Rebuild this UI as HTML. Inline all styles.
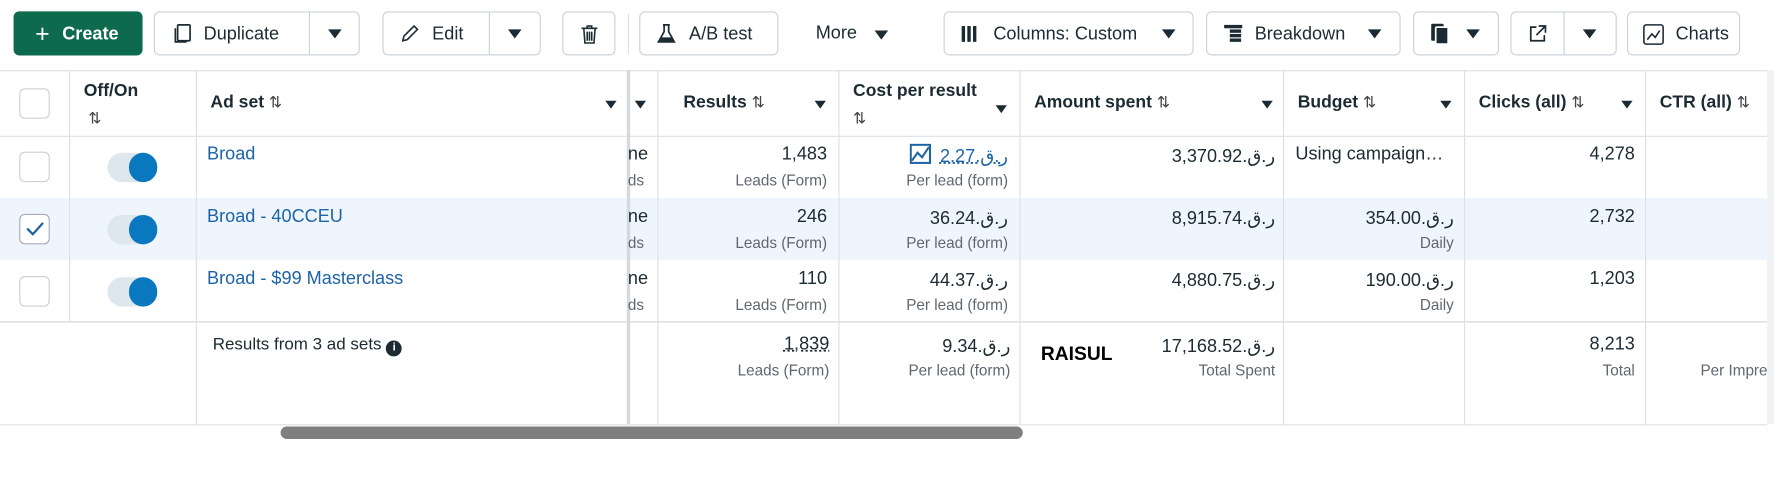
<!DOCTYPE html>
<html><head><meta charset="utf-8"><style>
html,body{margin:0;padding:0;background:#fff;overflow:hidden;width:1774px;height:499px}
#w{position:absolute;left:0;top:0;width:1568px;height:441px;transform:scale(1.13138);transform-origin:0 0;font-family:"Liberation Sans","DejaVu Sans",sans-serif;color:#1c2b33;font-size:16px}
.a{position:absolute}
.btn{position:absolute;top:10px;height:39px;border:1px solid #cbd2d9;border-radius:5px;background:#fff;box-sizing:border-box;font-size:16px}
.btn > span.a{top:10px;line-height:19px}
.btn > span.tri{top:15px}
.dv{position:absolute;top:0;bottom:0;width:1px;background:#cbd2d9}
.tri{display:inline-block;width:0;height:0;border-left:6px solid transparent;border-right:6px solid transparent;border-top:8px solid #1c2b33}
.vl{position:absolute;width:1px;background:#dde1e5}
.hl{position:absolute;height:1px;background:#dde1e5;left:0;width:1562px}
.r{position:absolute;text-align:right}
.sub{font-size:13.5px;color:#606770}
.lnk{color:#1d63a8}
.cb{position:absolute;left:17px;width:27px;height:27px;border:1px solid #ccd0d5;border-radius:5px;box-sizing:border-box;background:#fff}
.tg{position:absolute;left:95px;width:44px;height:26px;border-radius:13px;background:#dfe7ee}
.tg:after{content:"";position:absolute;right:0;top:0;width:25px;height:26px;border-radius:13px;background:#0a78be}
.hd{position:absolute;top:82px;font-weight:bold;font-size:15.5px}
.st{font-weight:normal;color:#444;font-size:14px}
</style></head><body><div id="w">
<div class="btn" style="left:12px;width:114px;background:#0e6a4c;border-color:#0e6a4c;color:#fff;font-weight:bold"><span class="a" style="left:18px;top:7px;font-size:22px;font-weight:normal;line-height:24px">+</span><span class="a" style="left:42px">Create</span></div>
<div class="btn" style="left:136px;width:182px"><svg class="a" style="left:14px;top:9px" width="20" height="20" viewBox="0 0 20 20" fill="none" stroke="#1c2b33" stroke-width="1.5"><rect x="6" y="2" width="11" height="14" rx="1"/><path d="M4 5v12h10"/></svg><span class="a" style="left:43px">Duplicate</span><div class="dv" style="left:136px"></div><span class="a tri" style="left:153px"></span></div>
<div class="btn" style="left:338px;width:140px"><svg class="a" style="left:13px;top:9px" width="20" height="20" viewBox="0 0 20 20" fill="none" stroke="#1c2b33" stroke-width="1.4"><path d="M4 16l1-4 9-9 3 3-9 9z"/></svg><span class="a" style="left:43px">Edit</span><div class="dv" style="left:93px"></div><span class="a tri" style="left:110px"></span></div>
<div class="btn" style="left:497px;width:47px"><svg class="a" style="left:13px;top:9px" width="20" height="20" viewBox="0 0 20 20" fill="none" stroke="#1c2b33" stroke-width="1.4"><path d="M3 5h14M8 5V3h4v2M5 5l1 13h8l1-13M8 8v8M10 8v8M12 8v8"/></svg></div>
<div class="a" style="left:555px;top:12px;width:1px;height:36px;background:#dde1e5"></div>
<div class="btn" style="left:565px;width:123px"><svg class="a" style="left:13px;top:9px" width="20" height="20" viewBox="0 0 20 20"><path d="M7 2h6M8 2v6L3 17h14L12 8V2" fill="none" stroke="#1c2b33" stroke-width="1.5"/><path d="M5 13h10l2 4H3z" fill="#1c2b33"/></svg><span class="a" style="left:43px">A/B test</span></div>
<div class="a" style="left:721px;top:21px">More</div><span class="a tri" style="left:773px;top:27px"></span>
<div class="btn" style="left:834px;width:221px"><span class="a" style="left:15px;top:12px;width:3px;height:14px;background:#1c2b33;box-shadow:5px 0 #1c2b33,10px 0 #1c2b33"></span><span class="a" style="left:43px">Columns: Custom</span><span class="a tri" style="left:192px"></span></div>
<div class="btn" style="left:1066px;width:172px"><svg class="a" style="left:14px;top:10px" width="18" height="18" viewBox="0 0 18 18" fill="#1c2b33"><rect x="1" y="1" width="16" height="3"/><rect x="6" y="5" width="10" height="3"/><rect x="6" y="9" width="10" height="3"/><rect x="6" y="13" width="10" height="3"/></svg><span class="a" style="left:42px">Breakdown</span><span class="a tri" style="left:142px"></span></div>
<div class="btn" style="left:1249px;width:76px"><svg class="a" style="left:14px;top:9px" width="18" height="20" viewBox="0 0 18 20" fill="#1c2b33"><rect x="1" y="1" width="11" height="15" rx="1"/><rect x="5" y="4" width="11" height="15" rx="1" stroke="#fff" stroke-width="1.5"/></svg><span class="a tri" style="left:46px"></span></div>
<div class="btn" style="left:1335px;width:94px"><svg class="a" style="left:14px;top:10px" width="18" height="18" viewBox="0 0 18 18" fill="none" stroke="#1c2b33" stroke-width="1.5"><path d="M8 3H3v12h12v-5M10 2h6v6M16 2L8 10"/></svg><div class="dv" style="left:46px"></div><span class="a tri" style="left:63px"></span></div>
<div class="btn" style="left:1438px;width:100px"><svg class="a" style="left:13px;top:10px" width="19" height="19" viewBox="0 0 19 19" fill="none" stroke="#1c2b33" stroke-width="1.4"><rect x="1" y="1" width="17" height="17" rx="2"/><path d="M4 14l4-5 3 3 4-6"/></svg><span class="a" style="left:42px">Charts</span></div>
<div class="hl" style="top:62px"></div>
<div class="hl" style="top:120px"></div>
<div class="a" style="left:0;top:175px;width:1562px;height:55px;background:#eef5fc"></div>
<div class="hl" style="top:284px;background:#d0d4d8"></div>
<div class="hl" style="top:375px"></div>
<div class="vl" style="left:61px;top:62px;height:223px"></div>
<div class="vl" style="left:173px;top:62px;height:313px"></div>
<div class="a" style="left:554px;top:62px;width:3px;height:313px;background:#d6d9dc"></div>
<div class="vl" style="left:581px;top:62px;height:313px"></div>
<div class="vl" style="left:741px;top:62px;height:313px"></div>
<div class="vl" style="left:901px;top:62px;height:313px"></div>
<div class="vl" style="left:1134px;top:62px;height:313px"></div>
<div class="vl" style="left:1294px;top:62px;height:313px"></div>
<div class="vl" style="left:1454px;top:62px;height:313px"></div>
<div class="a" style="left:1562px;top:62px;width:6px;height:313px;background:#f0f2f4"></div>
<div class="cb" style="top:78px"></div>
<div class="a" style="left:74px;top:72px;font-weight:bold;font-size:15.5px">Off/On</div>
<div class="a st" style="left:78px;top:96px">⇅</div>
<div class="hd" style="left:186px">Ad set <span class="st">⇅</span></div><span class="a tri" style="left:535px;top:89px;border-width:7px 5px 0"></span>
<span class="a tri" style="left:561px;top:89px;border-width:7px 5px 0"></span>
<div class="hd" style="left:604px">Results <span class="st">⇅</span></div><span class="a tri" style="left:720px;top:89px;border-width:7px 5px 0"></span>
<div class="a" style="left:754px;top:72px;font-weight:bold;font-size:15.5px">Cost per result</div><div class="a st" style="left:754px;top:96px">⇅</div><span class="a tri" style="left:880px;top:93px;border-width:7px 5px 0"></span>
<div class="hd" style="left:914px">Amount spent <span class="st">⇅</span></div><span class="a tri" style="left:1115px;top:89px;border-width:7px 5px 0"></span>
<div class="hd" style="left:1147px">Budget <span class="st">⇅</span></div><span class="a tri" style="left:1273px;top:89px;border-width:7px 5px 0"></span>
<div class="hd" style="left:1307px">Clicks (all) <span class="st">⇅</span></div><span class="a tri" style="left:1433px;top:89px;border-width:7px 5px 0"></span>
<div class="hd" style="left:1467px;white-space:nowrap">CTR (all) <span class="st">⇅</span></div>
<div class="cb" style="top:134px"></div><div class="tg" style="top:135px"></div>
<div class="a lnk" style="left:183px;top:128px">Broad</div>
<div class="a" style="left:555px;top:128px">ne</div><div class="a sub" style="left:555px;top:152px">ds</div>
<div class="r" style="right:837px;top:128px">1,483</div><div class="r sub" style="right:837px;top:152px">Leads (Form)</div>
<svg class="a" style="left:804px;top:127px" width="20" height="19" viewBox="0 0 20 19" fill="none" stroke="#1d63a8" stroke-width="1.8"><rect x="1" y="1" width="17" height="16"/><path d="M2 15l5-7 4 4 6-9"/></svg>
<div class="r lnk" style="right:677px;top:128px;text-decoration:underline dotted">2.27.ر.ق</div><div class="r sub" style="right:677px;top:152px">Per lead (form)</div>
<div class="r" style="right:441px;top:128px">3,370.92.ر.ق</div>
<div class="a" style="left:1145px;top:128px">Using campaign…</div>
<div class="r" style="right:123px;top:128px">4,278</div>
<div class="cb" style="top:189px;border-color:#aab"></div><svg class="a" style="left:22px;top:195px" width="18" height="14"><path d="M2 7l5 5 9-10" fill="none" stroke="#1d63a8" stroke-width="2"/></svg><div class="tg" style="top:190px"></div>
<div class="a lnk" style="left:183px;top:183px">Broad - 40CCEU</div>
<div class="a" style="left:555px;top:183px">ne</div><div class="a sub" style="left:555px;top:207px">ds</div>
<div class="r" style="right:837px;top:183px">246</div><div class="r sub" style="right:837px;top:207px">Leads (Form)</div>
<div class="r" style="right:677px;top:183px">36.24.ر.ق</div><div class="r sub" style="right:677px;top:207px">Per lead (form)</div>
<div class="r" style="right:441px;top:183px">8,915.74.ر.ق</div>
<div class="r" style="right:283px;top:183px">354.00.ر.ق</div><div class="r sub" style="right:283px;top:207px">Daily</div>
<div class="r" style="right:123px;top:183px">2,732</div>
<div class="cb" style="top:244px"></div><div class="tg" style="top:245px"></div>
<div class="a lnk" style="left:183px;top:238px">Broad - $99 Masterclass</div>
<div class="a" style="left:555px;top:238px">ne</div><div class="a sub" style="left:555px;top:262px">ds</div>
<div class="r" style="right:837px;top:238px">110</div><div class="r sub" style="right:837px;top:262px">Leads (Form)</div>
<div class="r" style="right:677px;top:238px">44.37.ر.ق</div><div class="r sub" style="right:677px;top:262px">Per lead (form)</div>
<div class="r" style="right:441px;top:238px">4,880.75.ر.ق</div>
<div class="r" style="right:283px;top:238px">190.00.ر.ق</div><div class="r sub" style="right:283px;top:262px">Daily</div>
<div class="r" style="right:123px;top:238px">1,203</div>
<div class="a" style="left:188px;top:296px;font-size:15px">Results from 3 ad sets <span style="display:inline-block;width:14px;height:14px;border-radius:7px;background:#1c2b33;color:#fff;font-size:10px;text-align:center;line-height:14px;font-weight:bold;vertical-align:-1px">i</span></div>
<div class="r" style="right:835px;top:296px;text-decoration:underline dotted">1,839</div><div class="r sub" style="right:835px;top:320px">Leads (Form)</div>
<div class="r" style="right:675px;top:296px">9.34.ر.ق</div><div class="r sub" style="right:675px;top:320px">Per lead (form)</div>
<div class="a" style="left:920px;top:303px;font-weight:bold;font-size:17px;color:#000">RAISUL</div>
<div class="r" style="right:441px;top:296px">17,168.52.ر.ق</div><div class="r sub" style="right:441px;top:320px">Total Spent</div>
<div class="r" style="right:123px;top:296px">8,213</div><div class="r sub" style="right:123px;top:320px">Total</div>
<div class="a sub" style="left:1503px;top:320px;white-space:nowrap;width:59px;overflow:hidden">Per Impre</div>
<div class="a" style="left:248px;top:377px;width:656px;height:11px;border-radius:6px;background:#7f7f7f"></div>
</div></body></html>
